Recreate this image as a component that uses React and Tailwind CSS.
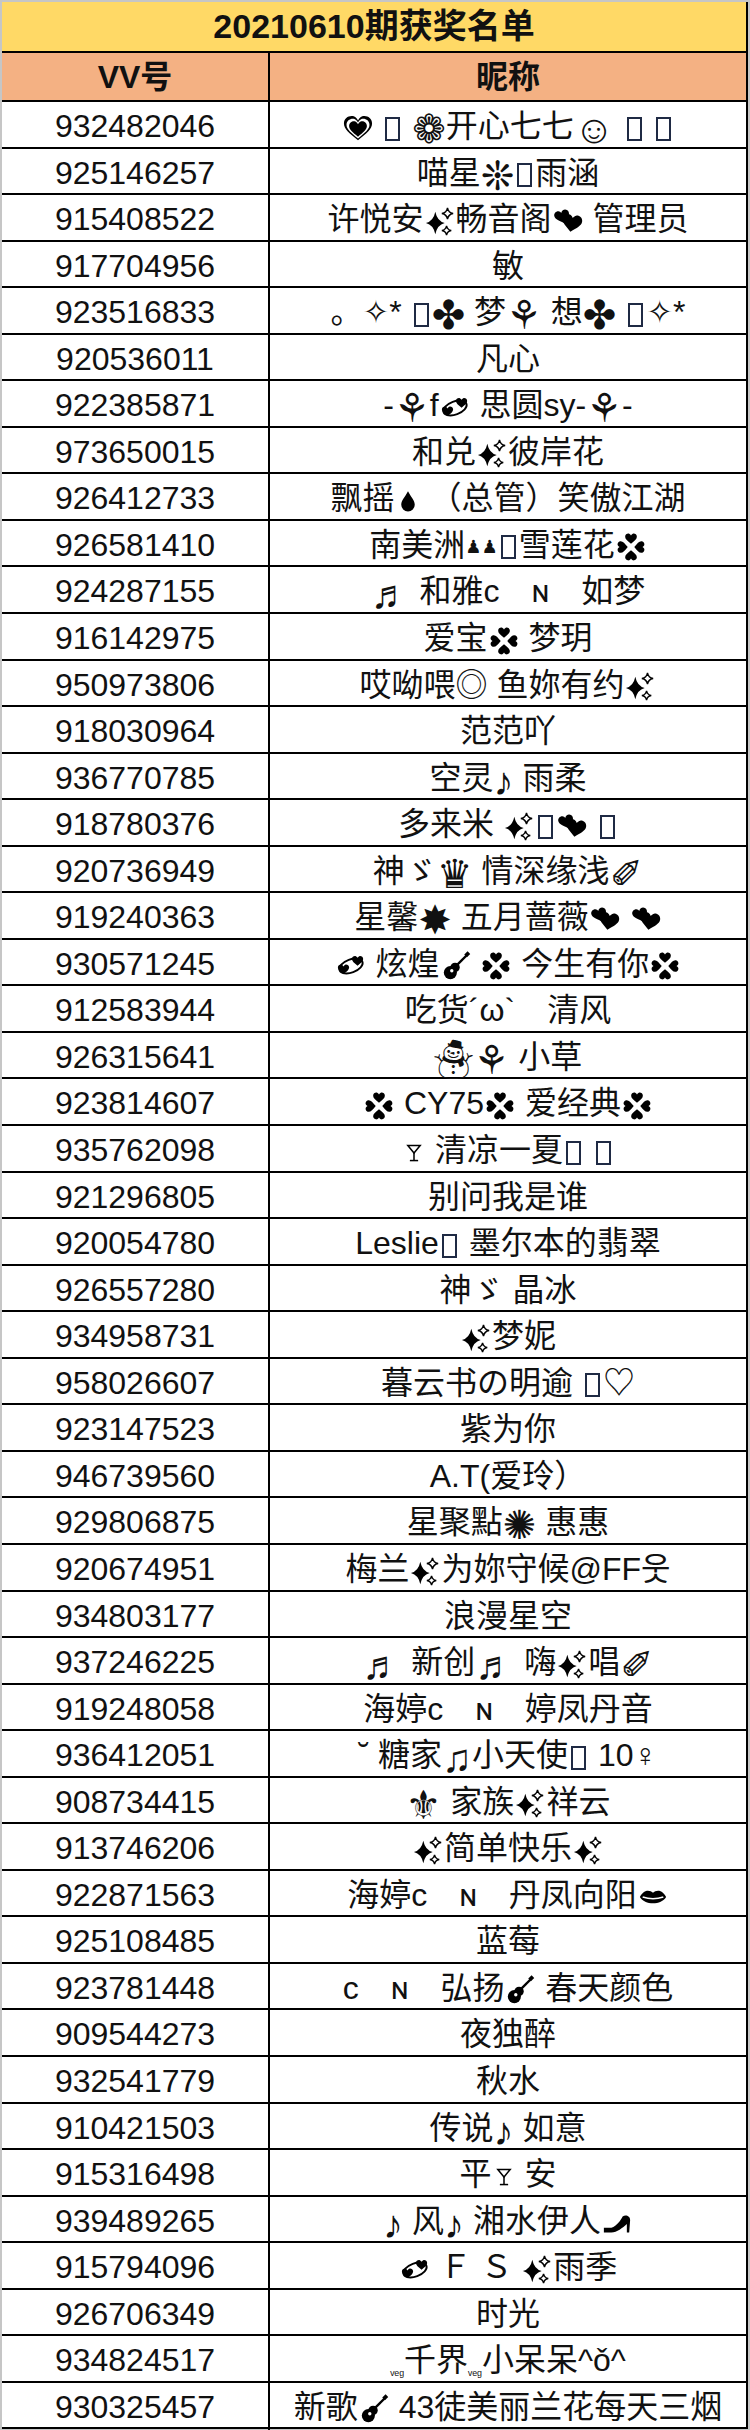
const heart = "M0,4 C-3,1.5 -5,0 -5,-2 C-5,-4 -3,-5 -1.5,-4.5 C-0.8,-4.2 -0.3,-3.6 0,-3 C0.3,-3.6 0.8,-4.2 1.5,-4.5 C3,-5 5,-4 5,-2 C5,0 3,1.5 0,4Z";

const Ico = ({ children, w = 30 }) => (
    <svg viewBox="0 0 32 32" width={w} height={30} className="inline-block align-middle mx-[1px]">
        {children}
    </svg>
);

const Sparkle = () => (
    <Ico>
        <path d="M11 5 Q13 15 21 17 Q13 19 11 29 Q9 19 1 17 Q9 15 11 5Z" fill="#000" />
        <path d="M24 1 Q24.9 6.1 30 7 Q24.9 7.9 24 13 Q23.1 7.9 18 7 Q23.1 6.1 24 1Z" fill="#fff" stroke="#000" strokeWidth="1.5" />
        <path d="M23 20 Q23.7 24.3 28 25 Q23.7 25.7 23 30 Q22.3 25.7 18 25 Q22.3 24.3 23 20Z" fill="#fff" stroke="#000" strokeWidth="1.5" />
    </Ico>
);

const Hearts2 = () => (
    <Ico>
        <path d={heart} transform="translate(10 11) rotate(-15) scale(1.6)" fill="#000" />
        <path d={heart} transform="translate(20 18) rotate(10) scale(2.1)" fill="#000" />
    </Ico>
);

const HeartsRing = () => (
    <Ico>
        <path d={heart} transform="translate(16 7.5) scale(1.25)" fill="#000" />
        <path d={heart} transform="translate(24.5 16) rotate(90) scale(1.25)" fill="#000" />
        <path d={heart} transform="translate(16 24.5) rotate(180) scale(1.25)" fill="#000" />
        <path d={heart} transform="translate(7.5 16) rotate(-90) scale(1.25)" fill="#000" />
    </Ico>
);

const Swirl = () => (
    <Ico>
        <ellipse cx="16" cy="16" rx="13" ry="7" transform="rotate(-20 16 16)" fill="none" stroke="#000" strokeWidth="2" />
        <path d={heart} transform="translate(8 20) scale(1.2)" fill="#000" />
        <path d={heart} transform="translate(23 11) scale(1.2)" fill="#000" />
    </Ico>
);

const Guitar = () => (
    <Ico>
        <line x1="14" y1="18" x2="28" y2="4" stroke="#000" strokeWidth="2.6" />
        <rect x="26" y="1" width="4" height="5" transform="rotate(45 28 3.5)" fill="#000" />
        <circle cx="10" cy="23" r="7" fill="#000" />
        <circle cx="15" cy="17.5" r="5" fill="#000" />
        <circle cx="11.5" cy="21" r="1.8" fill="#fff" />
    </Ico>
);

const Drop = () => (
    <Ico w={24}>
        <path d="M16 3 C 12 11 7 15 7 21 A9 9 0 0 0 25 21 C25 15 20 11 16 3Z" fill="#000" />
    </Ico>
);

const Cocktail = () => (
    <Ico w={22}>
        <path d="M7 5 H25 L16 16 Z" fill="none" stroke="#000" strokeWidth="2.2" />
        <line x1="16" y1="16" x2="16" y2="27" stroke="#000" strokeWidth="2.2" />
        <line x1="10" y1="27" x2="22" y2="27" stroke="#000" strokeWidth="2.2" />
    </Ico>
);

const Lips = () => (
    <Ico>
        <path d="M2 16 C7 7 13 9 16 11.5 C19 9 25 7 30 16 C25 25 7 25 2 16Z" fill="#000" />
        <path d="M5 16 Q16 19.5 27 16" stroke="#fff" strokeWidth="1.6" fill="none" />
    </Ico>
);

const Heel = () => (
    <Ico>
        <path d="M2 21 L10 21 C16 19 20 13 22 9 C25 7 30 8 30 13 L29 26 L26.5 26 L26.5 17 C22 21 16 26 10 26 L2 26Z" fill="#000" />
    </Ico>
);

const HeartO = () => (
    <Ico>
        <path d={heart} transform="translate(16 16) scale(3)" fill="#000" />
        <path d={heart} transform="translate(16 16.3) scale(2.45)" fill="#fff" />
        <path d={heart} transform="translate(16 16.6) scale(1.9)" fill="#000" />
    </Ico>
);

const Tofu = () => (
    <span className="inline-block w-[15px] h-[24px] border-2 border-[#1f2a44] align-middle mx-[3px]" />
);

const Pawns = () => <span className="text-[18px] align-middle">♟♟</span>;
const Tiny = () => <span className="text-[13px] align-bottom">ᵛᵉᵍ</span>;

const glyphs = {
    "✨": Sparkle,
    "💕": Hearts2,
    "💠": HeartsRing,
    "💞": Swirl,
    "🎸": Guitar,
    "💧": Drop,
    "🍸": Cocktail,
    "💋": Lips,
    "👠": Heel,
    "💟": HeartO,
    "□": Tofu,
    "👭": Pawns,
    "🔹": Tiny,
};

// DejaVu symbols that come out too small at the body size
const bigSyms = "♬♪♫⚘✐✸✺⚜☃✤❁☺♛❊";

const winners = [
    ["932482046", "💟 □ ❁开心七七☺ □ □"],
    ["925146257", "喵星❊□雨涵"],
    ["915408522", "许悦安✨畅音阁💕 管理员"],
    ["917704956", "敏"],
    ["923516833", "。✧* □✤ 梦⚘ 想✤ □✧*"],
    ["920536011", "凡心"],
    ["922385871", "-⚘f💞 思圆sy-⚘-"],
    ["973650015", "和兑✨彼岸花"],
    ["926412733", "飘摇💧 （总管）笑傲江湖"],
    ["926581410", "南美洲👭□雪莲花💠"],
    ["924287155", "♬ 和雅ᴄ　ɴ　如梦"],
    ["916142975", "爱宝💠 梦玥"],
    ["950973806", "哎呦喂◎ 鱼妳有约✨"],
    ["918030964", "范范吖"],
    ["936770785", "空灵♪ 雨柔"],
    ["918780376", "多来米 ✨□💕 □"],
    ["920736949", "神ゞ♛ 情深缘浅✐"],
    ["919240363", "星馨✸ 五月蔷薇💕 💕"],
    ["930571245", "💞 炫煌🎸 💠 今生有你💠"],
    ["912583944", "吃货´ω`　清风"],
    ["926315641", "☃⚘ 小草"],
    ["923814607", "💠 CY75💠 爱经典💠"],
    ["935762098", "🍸 清凉一夏□ □"],
    ["921296805", "别问我是谁"],
    ["920054780", "Leslie□ 墨尔本的翡翠"],
    ["926557280", "神ゞ 晶冰"],
    ["934958731", "✨梦妮"],
    ["958026607", "暮云书の明逾 □♡"],
    ["923147523", "紫为你"],
    ["946739560", "A.T(爱玲）"],
    ["929806875", "星聚點✺ 惠惠"],
    ["920674951", "梅兰✨为妳守候@FF웃"],
    ["934803177", "浪漫星空"],
    ["937246225", "♬ 新创♬ 嗨✨唱✐"],
    ["919248058", "海婷ᴄ　ɴ　婷凤丹音"],
    ["936412051", "˘ 糖家♫小天使□ 10♀"],
    ["908734415", "⚜ 家族✨祥云"],
    ["913746206", "✨简单快乐✨"],
    ["922871563", "海婷ᴄ　ɴ　丹凤向阳💋"],
    ["925108485", "蓝莓"],
    ["923781448", "ᴄ　ɴ　弘扬🎸 春天颜色"],
    ["909544273", "夜独醉"],
    ["932541779", "秋水"],
    ["910421503", "传说♪ 如意"],
    ["915316498", "平🍸 安"],
    ["939489265", "♪ 风♪ 湘水伊人👠"],
    ["915794096", "💞 Ｆ Ｓ ✨雨季"],
    ["926706349", "时光"],
    ["934824517", "🔹千界🔹小呆呆^ǒ^"],
    ["930325457", "新歌🎸 43徒美丽兰花每天三烟"],
];

// split a nickname into text runs and drawn glyphs
const Nick = ({ text }) => {
    const parts = [];
    let buf = "";
    const flush = () => {
        if (buf) parts.push(buf);
        buf = "";
    };
    Array.from(text).forEach((ch, i) => {
        const G = glyphs[ch];
        if (G) {
            flush();
            parts.push(<G key={i} />);
        } else if (bigSyms.includes(ch)) {
            flush();
            parts.push(<span key={i} className="text-[40px] leading-none align-middle">{ch}</span>);
        } else {
            buf += ch;
        }
    });
    flush();
    return <span className="whitespace-pre">{parts}</span>;
};

const font = "font-['Liberation_Sans','Noto_Sans_CJK_SC','DejaVu_Sans',sans-serif]";

export default function App() {
    return (
        <div className={`w-[750px] h-[2430px] bg-[#c6c6c6] pt-[2px] px-[2px] text-[#111] ${font}`}>
            <div className="border-r-2 border-black bg-white">
                <div className="h-[51px] bg-[#FFD966] border-b-2 border-black flex items-center justify-center text-[34px] font-bold">
                    20210610期获奖名单
                </div>
                <div className="grid grid-cols-[268px_1fr] h-[49px] bg-[#F4B183] border-b-2 border-black text-[32px] font-bold">
                    <div className="border-r-2 border-black flex items-center justify-center">VV号</div>
                    <div className="flex items-center justify-center">昵称</div>
                </div>
                {winners.map(([id, nick]) => (
                    <div key={id} className="grid grid-cols-[268px_1fr] h-[46.56px] border-b-2 border-black text-[32px]">
                        <div className="border-r-2 border-black flex items-center justify-center">{id}</div>
                        <div className="flex items-center justify-center">
                            <Nick text={nick} />
                        </div>
                    </div>
                ))}
            </div>
        </div>
    );
}
